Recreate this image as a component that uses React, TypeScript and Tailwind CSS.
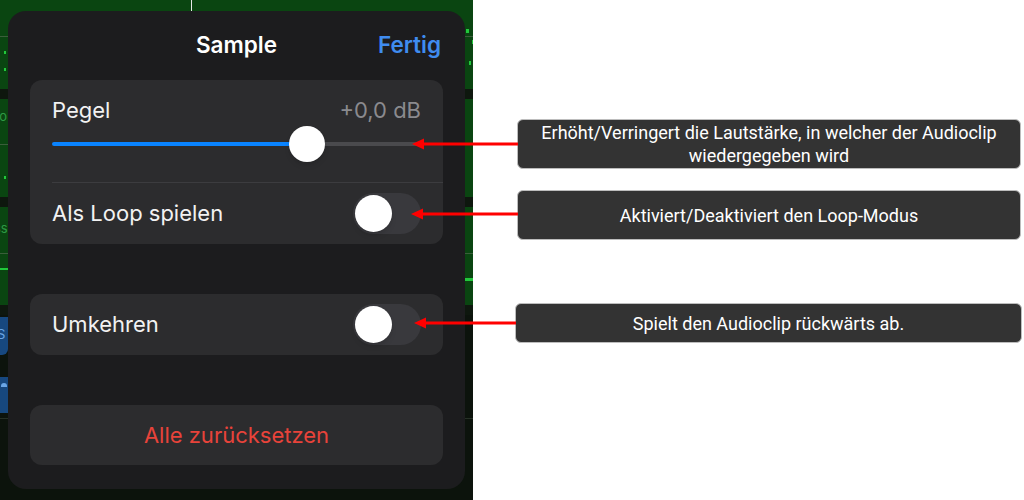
import React from 'react';

const iosFont = { fontFamily: 'Inter, "Noto Sans", sans-serif' };
const noteFont = { fontFamily: '"Liberation Sans Narrow", Roboto, "Liberation Sans", sans-serif' };

const Dot = ({ className }: { className: string }) => (
  <span className={`absolute bg-[#22c83c] ${className}`}></span>
);

const Toggle: React.FC = () => (
  <div className="w-[68px] h-[41px] rounded-full bg-[#39393d] p-[2px] flex items-center">
    <div className="w-[37px] h-[37px] rounded-full bg-white shadow-md"></div>
  </div>
);

const TrackBackground: React.FC = () => (
  <div className="flex flex-col h-full w-full">
    <div className="relative h-[37px] bg-[#0a4511] border-b border-[#3b5e3b]">
      <span className="absolute left-[191px] top-0 w-px h-[12px] bg-[#e8e8e8]"></span>
      <Dot className="left-[466px] top-[29px] w-[3px] h-[4px]" />
    </div>
    <div className="relative h-[52px] bg-[#0a4511]">
      <Dot className="left-[4px] top-[14px] w-[2px] h-[3px]" />
      <Dot className="left-[4px] top-[31px] w-[2px] h-[3px]" />
      <Dot className="left-[469px] top-[24px] w-[2px] h-[4px]" />
      <Dot className="left-[472px] top-[3px] w-[1px] h-[4px]" />
    </div>
    <div className="h-[10px] bg-[#0e170e]"></div>
    <div className="relative h-[46px] bg-[#0a4511] border-b border-[#3b5e3b]">
      <span className="absolute left-[-4px] top-[8px] text-[13px] text-[#2e9a44]" style={iosFont}>lo</span>
      <Dot className="left-[465px] top-[54px] w-[8px] h-[3px]" />
    </div>
    <div className="relative h-[52px] bg-[#0a4511]">
      <Dot className="left-[4px] top-[31px] w-[2px] h-[3px]" />
    </div>
    <div className="h-[10px] bg-[#0e170e]"></div>
    <div className="relative h-[47px] bg-[#0a4511] border-b border-[#3b5e3b]">
      <span className="absolute left-[-6px] top-[12px] text-[13px] text-[#2e9a44]" style={iosFont}>ss</span>
    </div>
    <div className="relative h-[51px] bg-[#0a4511]">
      <Dot className="left-0 top-[14px] w-[8px] h-[2px]" />
      <Dot className="left-[465px] top-[24px] w-[8px] h-[3px]" />
    </div>
    <div className="h-[10px] bg-[#0e170e]"></div>
    <div className="relative flex-1 bg-[#0c130c]">
      <div className="absolute left-0 top-[2px] w-[8px] h-[38px] bg-[#17487f] rounded-br-[6px]">
        <span className="absolute left-[-3px] top-[8px] text-[13px] text-[#6aa6e6]" style={iosFont}>S</span>
      </div>
      <div className="absolute left-0 top-[62px] w-[8px] h-[36px] bg-[#17487f]">
        <span className="absolute left-[1px] top-[6px] w-[6px] h-[4px] rounded-t-full bg-[#6aa6e6]"></span>
      </div>
      <div className="absolute left-0 top-[103px] w-full h-px bg-[#263026]"></div>
    </div>
  </div>
);

const SamplePopover: React.FC = () => (
  <div className="absolute left-[8px] top-[11px] w-[457px] h-[478px] bg-[#1c1c1e] rounded-[18px] flex flex-col" style={iosFont}>
    <div className="relative flex items-center justify-center pt-[20px] pb-[21px] h-[69px]">
      <span className="text-white text-[22.5px] font-semibold leading-[28px]">Sample</span>
      <span className="absolute right-[24px] top-[20px] text-[#3f8cf0] text-[22.5px] font-semibold leading-[28px]">Fertig</span>
    </div>

    <div className="mx-[22px] bg-[#2c2c2e] rounded-[12px] flex flex-col">
      <div className="px-[22px] pt-[18px]">
        <div className="flex items-center justify-between h-[24px]">
          <span className="text-[#f2f2f2] text-[22px]">Pegel</span>
          <span className="text-[#8a8a8e] text-[22px]">+0,0 dB</span>
        </div>
        <div className="relative mt-[4px] h-[36px] flex items-center">
          <div className="flex w-full h-[4px] rounded-full overflow-hidden">
            <div className="w-[255px] bg-[#0a84ff]"></div>
            <div className="flex-1 bg-[#4a4a4d]"></div>
          </div>
          <div className="absolute left-[237px] top-0 w-[36px] h-[36px] rounded-full bg-white shadow-md"></div>
        </div>
      </div>
      <div className="mt-[20px] ml-[22px] h-px bg-[#3c3c3f]"></div>
      <div className="flex items-center justify-between px-[22px] h-[61px]">
        <span className="text-[#f2f2f2] text-[22px]">Als Loop spielen</span>
        <Toggle />
      </div>
    </div>

    <div className="mx-[22px] mt-[50px] bg-[#2c2c2e] rounded-[12px] flex items-center justify-between px-[22px] h-[61px]">
      <span className="text-[#f2f2f2] text-[22px]">Umkehren</span>
      <Toggle />
    </div>

    <div className="mx-[22px] mt-[50px] bg-[#2c2c2e] rounded-[12px] flex items-center justify-center h-[60px]">
      <span className="text-[#e8433a] text-[22px]">Alle zurücksetzen</span>
    </div>
  </div>
);

const Note = ({ children, className }: { children: React.ReactNode; className: string }) => (
  <div className={`bg-[#333333] border border-[#bdbdbd] rounded-[6px] flex flex-col items-center justify-center text-white text-[18px] leading-[23px] text-center ${className}`} style={noteFont}>
    {children}
  </div>
);

const Arrows: React.FC = () => (
  <svg className="absolute inset-0 pointer-events-none" width="1024" height="500">
    <g fill="#ff0000" stroke="#ff0000">
      <line x1="420" y1="144" x2="518" y2="144" strokeWidth="3" />
      <polygon points="412,144 424,138.5 424,149.5" strokeWidth="0" />
      <line x1="419" y1="214" x2="518" y2="214" strokeWidth="3" />
      <polygon points="411,214 423,208.5 423,219.5" strokeWidth="0" />
      <line x1="422" y1="323" x2="516" y2="323" strokeWidth="3" />
      <polygon points="414,323 426,317.5 426,328.5" strokeWidth="0" />
    </g>
  </svg>
);

export default function App() {
  return (
    <div className="relative w-[1024px] h-[500px] bg-white flex overflow-hidden">
      <div className="relative w-[473px] h-full shrink-0">
        <TrackBackground />
        <SamplePopover />
      </div>
      <div className="flex-1 flex flex-col pt-[119px]">
        <Note className="ml-[44px] w-[504px] h-[50px]">
          <span>Erhöht/Verringert die Lautstärke, in welcher der Audioclip</span>
          <span>wiedergegeben wird</span>
        </Note>
        <Note className="ml-[44px] mt-[21px] w-[504px] h-[50px]">
          <span>Aktiviert/Deaktiviert den Loop-Modus</span>
        </Note>
        <Note className="ml-[42px] mt-[63px] w-[507px] h-[40px]">
          <span>Spielt den Audioclip rückwärts ab.</span>
        </Note>
      </div>
      <Arrows />
    </div>
  );
}
